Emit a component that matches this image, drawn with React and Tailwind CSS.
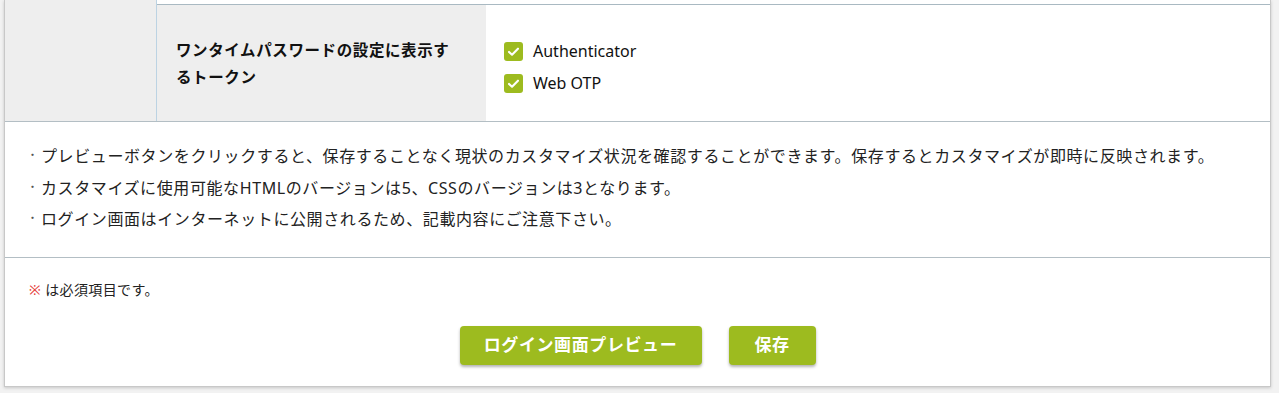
import React from 'react';

const font = { fontFamily: '"Noto Sans", "Noto Sans CJK JP", sans-serif' };

const Check = ({ label }) => (
  <label className="flex items-center gap-[10px] h-[32px]">
    <span className="w-[19px] h-[19px] rounded-[3px] bg-[#9dbb1f] flex items-center justify-center">
      <svg width="13" height="13" viewBox="0 0 16 16" fill="none">
        <path d="M2.5 8.5 L6.2 12 L13.5 4.5" stroke="white" strokeWidth="2.6" strokeLinecap="round" strokeLinejoin="round" />
      </svg>
    </span>
    <span className="text-[16px] text-[#111]">{label}</span>
  </label>
);

const notes = [
  'プレビューボタンをクリックすると、保存することなく現状のカスタマイズ状況を確認することができます。保存するとカスタマイズが即時に反映されます。',
  'カスタマイズに使用可能なHTMLのバージョンは5、CSSのバージョンは3となります。',
  'ログイン画面はインターネットに公開されるため、記載内容にご注意下さい。',
];

export default function App() {
  return (
    <div className="min-h-[393px] bg-[#f2f2f2] pb-[6px]" style={font}>
      <div className="ml-[4px] w-[1267px] bg-white border-l border-r border-b border-[#c8c8c8] shadow-[0_1px_3px_rgba(0,0,0,0.18)]">
        {/* settings table */}
        <div className="flex border-b border-[#b3bec4]">
          <div className="w-[152px] bg-[#eeeeee] border-r border-[#bcd3e3]" />
          <div className="flex-1 flex flex-col">
            <div className="h-[5px] border-b border-[#a9b9c2]" />
            <div className="flex h-[116px]">
              <div className="w-[329px] bg-[#eeeeee] flex items-center pl-[19px] pr-[30px]">
                <p className="text-[15.5px] tracking-[0.6px] font-bold leading-[27px] text-[#111] pt-[1px]">
                  ワンタイムパスワードの設定に表示するトークン
                </p>
              </div>
              <div className="flex-1 flex flex-col justify-center pl-[18px] pt-[8px]">
                <Check label="Authenticator" />
                <Check label="Web OTP" />
              </div>
            </div>
          </div>
        </div>

        {/* notes */}
        <ul className="border-b border-[#b3bec4] pt-[19px] pb-[21px] pl-[22px]">
          {notes.map((n) => (
            <li key={n} className="flex text-[16px] tracking-[0.6px] leading-[31.5px] text-[#222]">
              <span className="w-[14px] text-[11px] text-[#555] -mt-[2px]">・</span>
              <span>{n}</span>
            </li>
          ))}
        </ul>

        {/* footer */}
        <div className="pt-[22px] pb-[21px] px-[24px]">
          <p className="text-[14px] tracking-[0.4px] text-[#222] leading-[20px]">
            <span className="text-[#e53935] mr-[4px]">※</span>は必須項目です。
          </p>
          <div className="flex justify-center gap-[27px] mt-[26px]">
            <button className="w-[242px] h-[39px] rounded-[4px] bg-[#9dbb1f] text-white font-bold text-[17px] tracking-[0.6px] shadow-[0_2px_3px_rgba(0,0,0,0.3)]">
              ログイン画面プレビュー
            </button>
            <button className="w-[87px] h-[39px] rounded-[4px] bg-[#9dbb1f] text-white font-bold text-[17px] tracking-[0.6px] shadow-[0_2px_3px_rgba(0,0,0,0.3)]">
              保存
            </button>
          </div>
        </div>
      </div>
    </div>
  );
}
